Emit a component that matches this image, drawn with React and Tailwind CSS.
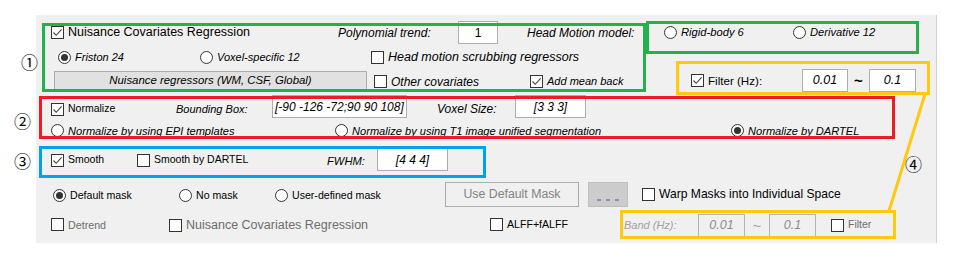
import React from 'react';

const FONT = { fontFamily: '"Liberation Sans", Arial, sans-serif' };

function Check({ checked, label, className = '', box = 'border-[#333]' }) {
  return (
    <div className="flex items-center">
      <span className={`w-[13px] h-[13px] shrink-0 border bg-white flex items-center justify-center ${box}`}>
        {checked && (
          <svg width="11" height="11" viewBox="0 0 11 11">
            <polyline points="1.5,5.5 4.2,8.3 9.6,2.4" fill="none" stroke="#444" strokeWidth="1.1" />
          </svg>
        )}
      </span>
      <span className={`ml-[4px] whitespace-nowrap ${className}`}>{label}</span>
    </div>
  );
}

function Radio({ checked, label, className = '' }) {
  return (
    <div className="flex items-center">
      <span className="w-[13px] h-[13px] shrink-0 rounded-full border border-[#333] bg-white flex items-center justify-center">
        {checked && <span className="w-[7px] h-[7px] rounded-full bg-[#333]" />}
      </span>
      <span className={`ml-[4px] whitespace-nowrap ${className}`}>{label}</span>
    </div>
  );
}

function Field({ children, className = '' }) {
  return (
    <div className={`h-[23px] shrink-0 flex items-center justify-center border whitespace-nowrap ${className}`}>
      {children}
    </div>
  );
}

export default function App() {
  return (
    <div className="relative w-[969px] h-[266px] bg-white text-black overflow-hidden" style={FONT}>
      <div className="pt-[15px] pl-[36px]">
        <div className="w-[901px] h-[228px] bg-[#f0f0f0] border-r border-[#d2d2d2] pt-[6px]">
          {/* row 1 */}
          <div className="flex items-center h-[23px] pl-[15px]">
            <div className="w-[287px] shrink-0">
              <Check checked label="Nuisance Covariates Regression" className="text-[12.5px]" />
            </div>
            <div className="w-[120px] shrink-0 italic text-[12px]">Polynomial trend:</div>
            <Field className="w-[40px] bg-white border-[#adadad] text-[12px]">1</Field>
            <div className="w-[29px] shrink-0" />
            <div className="w-[137px] shrink-0 italic text-[12px]">Head Motion model:</div>
            <div className="w-[129px] shrink-0">
              <Radio label="Rigid-body 6" className="italic text-[11.2px]" />
            </div>
            <Radio label="Derivative 12" className="italic text-[11.2px]" />
          </div>

          {/* row 2 */}
          <div className="flex items-center h-[26px] pl-[22px]">
            <div className="w-[142px] shrink-0">
              <Radio checked label="Friston 24" className="italic text-[11px]" />
            </div>
            <div className="w-[171px] shrink-0">
              <Radio label="Voxel-specific 12" className="italic text-[11px]" />
            </div>
            <Check label="Head motion scrubbing regressors" className="italic text-[12.5px]" />
          </div>

          {/* row 3 */}
          <div className="flex items-center h-[21px] pl-[18px]">
            <div className="w-[313px] h-[19px] shrink-0 flex items-center justify-center bg-[#e1e1e1] border border-[#adadad] italic text-[11.4px]">
              Nuisance regressors (WM, CSF, Global)
            </div>
            <div className="w-[7px] shrink-0" />
            <div className="w-[156px] shrink-0 pt-[2px]">
              <Check label="Other covariates" className="italic text-[12px]" />
            </div>
            <div className="w-[161px] shrink-0 pt-[2px]">
              <Check checked label="Add mean back" className="italic text-[11px]" />
            </div>
            <div className="w-[111px] shrink-0">
              <Check checked label="Filter (Hz):" className="text-[11.6px]" />
            </div>
            <Field className="w-[46px] bg-white border-[#adadad] italic text-[12.5px]">0.01</Field>
            <div className="w-[21px] shrink-0 text-center font-bold text-[15px] leading-none">~</div>
            <Field className="w-[47px] bg-white border-[#adadad] italic text-[12.5px]">0.1</Field>
          </div>

          {/* row 4 */}
          <div className="flex items-center h-[25px] mt-[3px] pl-[15px]">
            <div className="w-[125px] shrink-0 pt-[5px]">
              <Check checked label="Normalize" className="text-[10.5px]" />
            </div>
            <div className="w-[96px] shrink-0 pt-[6px] italic text-[11px]">Bounding Box:</div>
            <Field className="w-[135px] bg-white border-[#adadad] italic text-[12px] justify-start pl-[2px]">[-90 -126 -72;90 90 108]</Field>
            <div className="w-[30px] shrink-0" />
            <div className="w-[78px] shrink-0 pt-[5px] italic text-[12px]">Voxel Size:</div>
            <Field className="w-[71px] bg-white border-[#adadad] italic text-[12px]">[3 3 3]</Field>
          </div>

          {/* row 5 */}
          <div className="flex items-center h-[24px] pl-[15px]">
            <div className="w-[284px] shrink-0">
              <Radio label="Normalize by using EPI templates" className="italic text-[11.1px]" />
            </div>
            <div className="w-[396px] shrink-0">
              <Radio label="Normalize by using T1 image unified segmentation" className="italic text-[11.1px]" />
            </div>
            <Radio checked label="Normalize by DARTEL" className="italic text-[11.1px]" />
          </div>

          {/* row 6 */}
          <div className="flex items-center h-[25px] mt-[4px] pl-[15px]">
            <div className="w-[86px] shrink-0 pt-[1px]">
              <Check checked label="Smooth" className="text-[10.5px]" />
            </div>
            <div className="w-[190px] shrink-0 pt-[1px]">
              <Check label="Smooth by DARTEL" className="text-[10.5px]" />
            </div>
            <div className="w-[50px] shrink-0 pt-[3px] italic text-[11.2px]">FWHM:</div>
            <Field className="w-[71px] bg-white border-[#adadad] italic text-[12px]">[4 4 4]</Field>
          </div>

          {/* row 7 */}
          <div className="flex items-center h-[27px] mt-[9px] pl-[17px]">
            <div className="w-[126px] shrink-0 pt-[2px]">
              <Radio checked label="Default mask" className="text-[10.6px]" />
            </div>
            <div className="w-[96px] shrink-0 pt-[2px]">
              <Radio label="No mask" className="text-[10.6px]" />
            </div>
            <div className="w-[170px] shrink-0 pt-[2px]">
              <Radio label="User-defined mask" className="text-[10.6px]" />
            </div>
            <div className="w-[134px] h-[25px] shrink-0 flex items-center justify-center border border-[#adadad] text-[#838383] text-[12.3px]">
              Use Default Mask
            </div>
            <div className="w-[9px] shrink-0" />
            <div className="w-[40px] h-[25px] shrink-0 flex items-end justify-center gap-[5px] pb-[5px] bg-[#cccccc] border border-[#bfbfbf]">
              <span className="w-[4px] h-[2px] bg-[#8a96a6]" />
              <span className="w-[4px] h-[2px] bg-[#8a96a6]" />
              <span className="w-[4px] h-[2px] bg-[#8a96a6]" />
            </div>
            <div className="w-[14px] shrink-0" />
            <Check label="Warp Masks into Individual Space" className="text-[12.1px]" />
          </div>

          {/* row 8 */}
          <div className="flex items-center h-[28px] mt-[3px] pl-[15px]">
            <div className="w-[118px] shrink-0">
              <Check label="Detrend" className="text-[10.7px] text-[#6d6d6d]" />
            </div>
            <div className="w-[321px] shrink-0">
              <Check label="Nuisance Covariates Regression" className="text-[12.5px] text-[#6d6d6d]" />
            </div>
            <div className="w-[134px] shrink-0">
              <Check label="ALFF+fALFF" className="text-[10.6px]" />
            </div>
            <div className="w-[74px] shrink-0 italic text-[11px] text-[#a0a0a0]">Band (Hz):</div>
            <Field className="w-[47px] border-[#b4b4b4] italic text-[12.5px] text-[#8c8c8c]">0.01</Field>
            <div className="w-[24px] shrink-0 text-center text-[15px] leading-none text-[#a0a0a0]">~</div>
            <Field className="w-[47px] border-[#b4b4b4] italic text-[12.5px] text-[#8c8c8c]">0.1</Field>
            <div className="w-[15px] shrink-0" />
            <Check label="Filter" className="text-[10.5px] text-[#6d6d6d]" />
          </div>
        </div>
      </div>

      {/* annotation overlays */}
      <div className="absolute left-[42px] top-[23px] w-[604px] h-[69px] border-[3px] border-[#22b14c]" />
      <div className="absolute left-[646px] top-[21px] w-[273px] h-[33px] border-[3px] border-[#22b14c]" />
      <div className="absolute left-[676px] top-[61px] w-[254px] h-[34px] border-[3px] border-[#ffc90e]" />
      <div className="absolute left-[39px] top-[96px] w-[856px] h-[43px] border-[3px] border-[#ed1c24]" />
      <div className="absolute left-[39px] top-[146px] w-[447px] h-[32px] border-[3px] border-[#00a2e8]" />
      <div className="absolute left-[620px] top-[210px] w-[276px] h-[29px] border-[3px] border-[#ffc90e]" />
      <svg className="absolute left-0 top-0" width="969" height="266">
        <line x1="925" y1="94" x2="889" y2="211" stroke="#ffc90e" strokeWidth="3" />
      </svg>

      <span className="absolute left-[21px] top-[53px] text-[17px] leading-none" style={{ fontFamily: '"Noto Sans CJK SC", "DejaVu Sans", sans-serif' }}>①</span>
      <span className="absolute left-[14px] top-[112px] text-[17px] leading-none" style={{ fontFamily: '"Noto Sans CJK SC", "DejaVu Sans", sans-serif' }}>②</span>
      <span className="absolute left-[14px] top-[152px] text-[17px] leading-none" style={{ fontFamily: '"Noto Sans CJK SC", "DejaVu Sans", sans-serif' }}>③</span>
      <span className="absolute left-[905px] top-[155px] text-[17px] leading-none" style={{ fontFamily: '"Noto Sans CJK SC", "DejaVu Sans", sans-serif' }}>④</span>
    </div>
  );
}
